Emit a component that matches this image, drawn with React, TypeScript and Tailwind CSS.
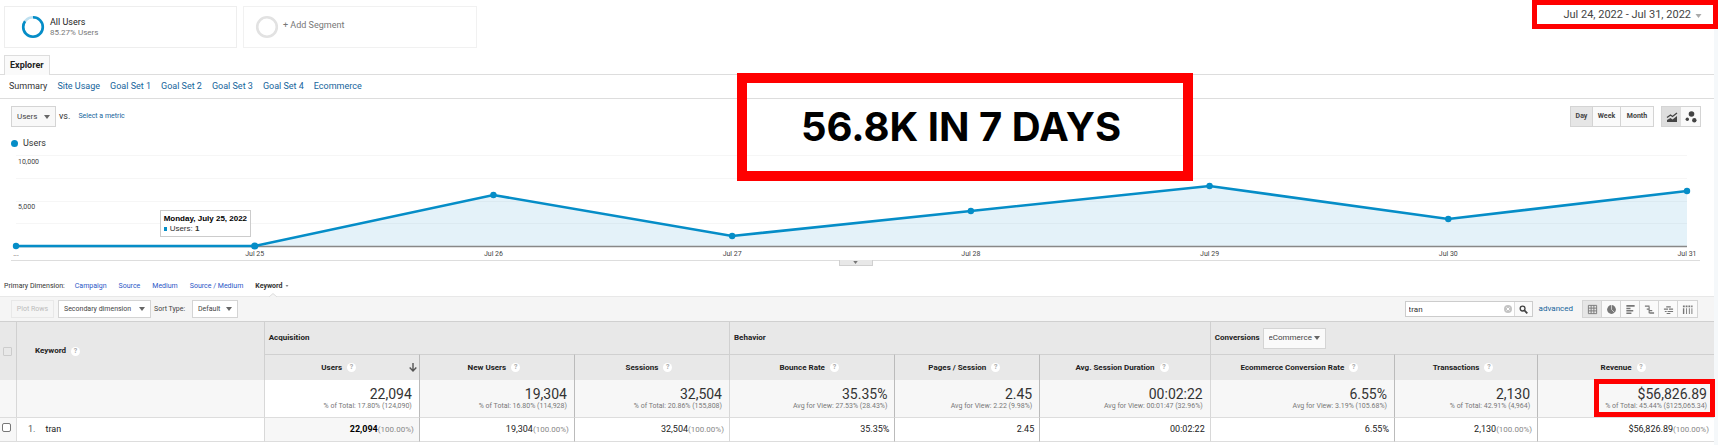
import React, { useState } from 'react';
import clsx from 'clsx';

const POINTS = [
  { label: '...', y: 96 },
  { label: 'Jul 25', y: 96 },
  { label: 'Jul 26', y: 45 },
  { label: 'Jul 27', y: 86 },
  { label: 'Jul 28', y: 61 },
  { label: 'Jul 29', y: 36 },
  { label: 'Jul 30', y: 69 },
  { label: 'Jul 31', y: 41 },
];

const LINKS = ['Summary', 'Site Usage', 'Goal Set 1', 'Goal Set 2', 'Goal Set 3', 'Goal Set 4', 'Ecommerce'];
const DIMENSIONS = ['Campaign', 'Source', 'Medium', 'Source / Medium'];

interface Metric {
  name: string;
  total: string;
  note: string;
  value: string;
  share?: boolean;
  group?: boolean;
}

const METRICS: Metric[] = [
  { name: 'Users', total: '22,094', note: '% of Total: 17.80% (124,090)', value: '22,094', share: true, group: true },
  { name: 'New Users', total: '19,304', note: '% of Total: 16.80% (114,928)', value: '19,304', share: true },
  { name: 'Sessions', total: '32,504', note: '% of Total: 20.86% (155,808)', value: '32,504', share: true },
  { name: 'Bounce Rate', total: '35.35%', note: 'Avg for View: 27.53% (28.43%)', value: '35.35%', group: true },
  { name: 'Pages / Session', total: '2.45', note: 'Avg for View: 2.22 (9.98%)', value: '2.45' },
  { name: 'Avg. Session Duration', total: '00:02:22', note: 'Avg for View: 00:01:47 (32.96%)', value: '00:02:22' },
  { name: 'Ecommerce Conversion Rate', total: '6.55%', note: 'Avg for View: 3.19% (105.68%)', value: '6.55%', group: true },
  { name: 'Transactions', total: '2,130', note: '% of Total: 42.91% (4,964)', value: '2,130', share: true },
  { name: 'Revenue', total: '$56,826.89', note: '% of Total: 45.44% ($125,065.34)', value: '$56,826.89', share: true },
];

function Caret({ className = 'w-1.5 h-1' }: { className?: string }) {
  return (
    <svg viewBox="0 0 6 4" className={clsx('fill-current', className)} aria-hidden="true">
      <path d="M0 0h6L3 4z" />
    </svg>
  );
}

interface DropdownProps {
  label: string;
  value: string;
  className?: string;
}

function Dropdown({ label, value, className }: DropdownProps) {
  return (
    <span className={clsx('relative flex items-center border border-[#d4d4d4] text-[#444]', className)}>
      <select aria-label={label} className="appearance-none w-full h-full pl-[5px] bg-transparent outline-none cursor-pointer">
        <option>{value}</option>
      </select>
      <span className="absolute right-[5px] pointer-events-none text-[#666]"><Caret /></span>
    </span>
  );
}

function Help({ name }: { name: string }) {
  return (
    <button
      aria-label={`About ${name}`}
      className="w-[9px] h-[9px] ml-[5px] rounded-full bg-white text-[#aaa] text-[7px] leading-[9px] font-bold text-center shrink-0"
    >
      ?
    </button>
  );
}

function Segments() {
  return (
    <div className="flex gap-1.5 pl-1 pt-1.5">
      <button className="flex items-center w-[233px] h-[42px] pl-4 border border-[#eee] text-left">
        <svg viewBox="0 0 24 24" className="w-6 h-6" fill="none" strokeWidth="2.6">
          <circle cx="12" cy="12" r="9.8" stroke="#bfe0f0" />
          <circle cx="12" cy="12" r="9.8" stroke="#058dc7" pathLength="100" strokeDasharray="85 15" transform="rotate(-90 12 12)" />
        </svg>
        <span className="ml-[5px]">
          <span className="block text-[9px] leading-[11px] text-[#222]">All Users</span>
          <span className="block text-[8px] leading-[10px] text-[#777]">85.27% Users</span>
        </span>
      </button>
      <button className="flex items-center w-[234px] h-[42px] pl-[11px] border border-[#f1f1f1] text-left">
        <svg viewBox="0 0 24 24" className="w-6 h-6" fill="none">
          <circle cx="12" cy="12" r="9.8" stroke="#e2e2e2" strokeWidth="2.6" />
        </svg>
        <span className="ml-1 pb-[3px] text-[9px] leading-[11px] text-[#777]">+ Add Segment</span>
      </button>
    </div>
  );
}

function Chart() {
  const step = 100 / (POINTS.length - 1);
  const line = POINTS.map((p, i) => `${i * step},${p.y}`).join(' ');

  return (
    <div className="relative ml-[11px] mr-[14px] border-b border-[#ddd]">
      <div className="pl-[5px] pr-[13px]">
        <svg className="block w-full h-[109px] overflow-visible" role="img" aria-label="Users per day">
          {[4, 27, 50, 72].map((y) => (
            <line key={y} x1="0" x2="100%" y1={y + 0.5} y2={y + 0.5} stroke="#f6f6f6" />
          ))}
          <svg viewBox="0 1 100 110" width="100%" height="110" preserveAspectRatio="none" className="overflow-visible">
            <polygon points={`0,96 ${line} 100,96`} fill="#058dc7" fillOpacity="0.11" />
          </svg>
          <line x1="0" x2="100%" y1="95.5" y2="95.5" stroke="#888" strokeWidth="1.5" />
          <svg viewBox="0 1 100 110" width="100%" height="110" preserveAspectRatio="none" className="overflow-visible">
            <polyline points={line} fill="none" stroke="#058dc7" strokeWidth="2.6" vectorEffect="non-scaling-stroke" />
          </svg>
          {POINTS.map((p, i) => (
            <g key={p.label}>
              <circle cx={`${i * step}%`} cy={p.y - 1} r={i === 1 ? 3.6 : 3.2} fill="#058dc7" />
              <text x={`${i * step}%`} y="105" textAnchor="middle" className="text-[7px] fill-[#444]">{p.label}</text>
            </g>
          ))}
          <text x="2" y="13" className="text-[7px] fill-[#444]">10,000</text>
          <text x="2" y="58" className="text-[7px] fill-[#444]">5,000</text>
        </svg>
      </div>

      {/* Hovered day */}
      <div className="absolute left-[8.8%] top-[59px] h-[27px] px-[3px] pt-[3px] border border-[#ccc] bg-white font-['Liberation_Sans',sans-serif] text-[8px] leading-[10px] text-[#333] whitespace-nowrap">
        <div className="font-bold text-black">Monday, July 25, 2022</div>
        <div className="flex items-center gap-[3px]">
          <span className="w-[3px] h-1 bg-[#058dc7]" />
          <span>Users: <b>1</b></span>
        </div>
      </div>

      <button aria-label="Collapse chart" className="absolute left-[49%] top-[109px] w-[34px] h-1.5 flex items-center justify-center bg-[#e8e8e8] border border-t-0 border-[#d0d0d0] text-[#777]">
        <Caret className="w-[5px] h-[3px]" />
      </button>
    </div>
  );
}

const VIEWS = [
  {
    name: 'Data',
    icon: <path d="M1.5 1.5h9v9h-9zM1.5 4.5h9M1.5 7.5h9M4.5 1.5v9M7.5 1.5v9" fill="none" stroke="currentColor" />,
  },
  {
    name: 'Percentage',
    icon: (
      <>
        <circle cx="6" cy="6" r="4.8" />
        <path d="M6 1v5l3.5 3.5" fill="none" stroke="#f5f5f5" strokeWidth="0.7" />
      </>
    ),
  },
  { name: 'Performance', icon: <path d="M1.500 1h9v2h-9zM1.500 4h4.500v1.600H1.500zM1.500 6.600h7.500v1.600H1.500zM1.500 9.300h5.500v1.600H1.500z" /> },
  { name: 'Comparison', icon: <path d="M1 1.500h5v1.600H1zM5 3h1.200v7H5zM3 4.800h3v1.600H3zM5 6.500h4v1.400H5zM6 9h5v1.600H6z" /> },
  {
    name: 'Term Cloud',
    icon: <path d="M3.500 2.500h5v1.300h-5zM1 5h4.500v1.300H1zM6.500 5H11v1.300H6.500zM2 7.500h2v1.300H2zM5 7.500h6v1.300H5zM4 9.800h4v1H4z" />,
  },
  {
    name: 'Pivot',
    icon: <path d="M1 1.500h2v2H1zM4 1.500h2v2H4zM7 1.500h2v2H7zM10 1.500h1.500v2H10zM1 4.500h1.500V11H1zM4.500 4.500h1V11h-1zM7.500 4.500h1V11h-1zM10.300 4.500h1V11h-1z" />,
  },
];

function Toolbar() {
  const [query, setQuery] = useState('tran');

  return (
    <div className="flex items-center h-[25px] pl-[11px] pr-4 bg-[#f5f5f5] border-t border-[#e8e8e8] text-[7px] text-[#444]">
      <button disabled className="w-[43px] h-[18px] border border-[#e8e8e8] text-[#bbb] whitespace-nowrap">Plot Rows</button>
      <Dropdown label="Secondary dimension" value="Secondary dimension" className="w-[93px] h-[18px] ml-1 bg-white" />
      <span className="w-[38px] ml-[3px] whitespace-nowrap">Sort Type:</span>
      <Dropdown label="Sort type" value="Default" className="w-[46px] h-[18px] bg-white" />

      <div className="flex items-center ml-auto h-4 bg-white border border-[#ccc] text-[8px]">
        <input
          type="text"
          aria-label="Filter keywords"
          value={query}
          onChange={(e) => setQuery(e.target.value)}
          className="w-[98px] h-full pl-[3px] bg-transparent outline-none text-[#333]"
        />
        <button aria-label="Clear" onClick={() => setQuery('')} className="mr-[2px]">
          <svg viewBox="0 0 8 8" className="w-2 h-2">
            <circle cx="4" cy="4" r="4" fill="#c4c4c4" />
            <path d="M2.500 2.500l3 3M5.500 2.500l-3 3" stroke="#fff" />
          </svg>
        </button>
        <button aria-label="Search" className="flex items-center justify-center w-[18px] h-full border-l border-[#ddd] bg-[#fafafa]">
          <svg viewBox="0 0 10 10" className="w-[9px] h-[9px]" fill="none" stroke="#444">
            <circle cx="4" cy="4" r="2.700" strokeWidth="1.500" />
            <path d="M6 6l3.200 3.200" strokeWidth="2" />
          </svg>
        </button>
      </div>
      <a href="#advanced" className="ml-1.5 text-[8px] text-[#15649b]">advanced</a>
      <div className="flex ml-[9px] h-[18px] border border-[#d4d4d4] divide-x divide-[#d4d4d4] text-[#777]">
        {VIEWS.map((view, i) => (
          <button
            key={view.name}
            aria-label={view.name}
            className={clsx('flex items-center justify-center w-[19px]', i === 0 ? 'bg-[#e6e6e6]' : 'bg-[#fafafa]')}
          >
            <svg viewBox="0 0 12 12" className="w-[11px] h-[11px] fill-current">{view.icon}</svg>
          </button>
        ))}
      </div>
    </div>
  );
}

function KeywordTable() {
  return (
    <table className="w-full table-fixed border-separate border-spacing-0 text-[8px] text-[#222]">
      <colgroup>
        <col className="w-4" />
        <col className="w-[14.45%]" />
        <col className="w-[9.05%]" />
        <col className="w-[9.05%]" />
        <col className="w-[9.05%]" />
        <col className="w-[9.65%]" />
        <col className="w-[8.45%]" />
        <col className="w-[9.95%]" />
        <col className="w-[10.75%]" />
        <col className="w-[8.35%]" />
        <col />
      </colgroup>
      <thead className="bg-[#e8e8e8] text-left font-bold">
        <tr className="h-[33px]">
          <th rowSpan={2} className="border-t border-[#d0d0d0]">
            <input type="checkbox" disabled aria-label="Select all rows" className="appearance-none block w-[9px] h-[9px] ml-[3px] border border-[#ccc] rounded-[1px]" />
          </th>
          <th rowSpan={2} className="pl-[18px] border-t border-l border-[#d0d0d0]">
            <div className="flex items-center">Keyword<Help name="Keyword" /></div>
          </th>
          <th colSpan={3} className="pl-1 border-t border-l border-[#d0d0d0]">Acquisition</th>
          <th colSpan={3} className="pl-1 border-t border-l border-[#d0d0d0]">Behavior</th>
          <th colSpan={3} className="pl-1 border-t border-l border-[#d0d0d0]">
            <div className="flex items-center">
              Conversions
              <Dropdown label="Conversion type" value="eCommerce" className="w-[63px] h-[21px] ml-[3px] bg-[#fafafa] font-normal" />
            </div>
          </th>
        </tr>
        <tr className="h-[26px]">
          {METRICS.map((m, i) => (
            <th key={m.name} className={clsx('relative border-t border-l border-t-[#d0d0d0]', m.group ? 'border-l-[#d0d0d0]' : 'border-l-[#bbb]')}>
              <div className="flex items-center justify-center pr-1.5 whitespace-nowrap">{m.name}<Help name={m.name} /></div>
              {i === 0 && (
                <svg viewBox="0 0 8 9" className="absolute right-[2px] top-2 w-2 h-[9px]" fill="none" stroke="#555" strokeWidth="1.400">
                  <path d="M4 0v8M0.700 4.500L4 8l3.300-3.500" />
                </svg>
              )}
            </th>
          ))}
        </tr>
      </thead>
      <tbody>
        <tr className="h-[37px] bg-[#f7f7f7]">
          <td />
          <td className="border-l border-[#d8d8d8]" />
          {METRICS.map((m, i) => (
            <td
              key={m.name}
              className={clsx(
                'relative pr-[7px] border-l text-right whitespace-nowrap',
                m.group ? 'border-[#d8d8d8]' : 'border-[#bbb]',
                i === 0 && 'bg-white'
              )}
            >
              <div className="pt-px text-[14px] leading-[13px] text-[#333]">{m.total}</div>
              <div className="text-[7px] leading-[10px] text-[#777]">{m.note}</div>
              {m.name === 'Revenue' && (
                <div className="absolute -top-px -right-px bottom-0 w-[121px] border-[5px] border-[#f00]" />
              )}
            </td>
          ))}
        </tr>
        <tr className="h-[25px]">
          <td className="border-y border-[#ddd] bg-[#f7f7f7]">
            <input type="checkbox" aria-label="Select tran" className="appearance-none block w-[9px] h-[9px] ml-[2px] mb-1 border border-[#777] rounded-[2px] bg-white" />
          </td>
          <td className="pl-[11px] border-l border-y border-[#ddd] text-[9px]">
            <span className="mr-[10px] text-[#555]">1.</span>tran
          </td>
          {METRICS.map((m, i) => (
            <td
              key={m.name}
              className={clsx(
                'border-l border-y border-y-[#ddd] text-right text-[9px] whitespace-nowrap pr-[5px]',
                m.group ? 'border-l-[#d8d8d8]' : 'border-l-[#bbb]',
                i === 0 && 'bg-[#f7f7f7]'
              )}
            >
              <span className={clsx(i === 0 && 'font-bold text-black')}>{m.value}</span>
              {m.share && <span className="text-[8px] text-[#888]">(100.00%)</span>}
            </td>
          ))}
        </tr>
      </tbody>
    </table>
  );
}

export default function App() {
  return (
    <div className="relative pr-1 bg-[#f5f8fa] font-[Roboto,sans-serif] overflow-x-hidden">
      <div className="bg-white pb-[3px]">
        <header className="flex items-start justify-between h-[55px]">
          <Segments />
          <button className="flex items-center justify-end gap-1 w-[186px] h-[29px] -mr-1 pt-[2px] pr-[11px] border-[5px] border-[#f00] text-[11px] text-[#444] whitespace-nowrap">
            Jul 24, 2022 - Jul 31, 2022
            <span className="text-[#aaa]"><Caret className="w-[7px] h-1" /></span>
          </button>
        </header>

        <div className="flex h-5 pl-1 border-b border-[#ddd]">
          <button className="h-5 px-[5px] border border-b-0 border-[#ddd] bg-[#fafafa] text-[9px] font-bold text-[#222]">Explorer</button>
        </div>

        <nav className="flex items-center gap-[10px] h-6 pl-[9px] border-b border-[#ddd] text-[9px]">
          {LINKS.map((link, i) => (
            <a key={link} href={`#${link}`} className={i === 0 ? 'text-[#333]' : 'text-[#15649b]'}>{link}</a>
          ))}
        </nav>

        <div className="flex items-center pt-[7px] pl-[11px] pr-[13px] text-[8px]">
          <Dropdown label="Metric" value="Users" className="w-[45px] h-[21px] bg-[#f8f8f8]" />
          <span className="ml-[3px] text-[9px] text-[#333]">vs.</span>
          <a href="#metric" className="ml-2 text-[7px] text-[#15649b]">Select a metric</a>
          <div className="flex ml-auto h-[21px] border border-[#d4d4d4] divide-x divide-[#d4d4d4] text-[7px] font-bold text-[#444]">
            <button className="w-[22px] bg-[#e6e6e6]">Day</button>
            <button className="w-[28px] bg-[#fafafa]">Week</button>
            <button className="w-[32px] bg-[#fafafa]">Month</button>
          </div>
          <div className="flex ml-[7px] h-[21px] border border-[#d4d4d4] text-[#444]">
            <button aria-label="Line chart" className="flex items-center justify-center w-[19px] bg-[#dedede]">
              <svg viewBox="0 0 12 10" className="w-3 h-[10px]">
                <path d="M1 10V8l3.500-2 2 1.500L11 4v6z" fill="currentColor" />
                <path d="M1 5.500L4.500 3l2 1.500L11 1" fill="none" stroke="currentColor" strokeWidth="1.300" />
              </svg>
            </button>
            <button aria-label="Motion chart" className="flex items-center justify-center w-[19px] bg-[#fafafa]">
              <svg viewBox="0 0 12 12" className="w-3 h-3 fill-current">
                <circle cx="6.500" cy="3" r="2.800" />
                <circle cx="2.300" cy="8.300" r="1.700" />
                <circle cx="9.300" cy="9.300" r="2.200" />
              </svg>
            </button>
          </div>
        </div>

        <div className="flex items-center gap-[5px] h-6 pl-[11px] pt-[9px] text-[9px] text-[#333]">
          <span className="w-[7px] h-[7px] rounded-full bg-[#058dc7]" />
          Users
        </div>

        <Chart />

        <div className="flex items-end h-[35px] pb-1 pl-1 text-[7px] leading-3 text-[#333]">
          Primary Dimension:
          <div className="flex gap-3 ml-[10px]">
            {DIMENSIONS.map((dimension) => (
              <a key={dimension} href={`#${dimension}`} className="text-[#2a56c6]">{dimension}</a>
            ))}
            <button className="relative flex items-center gap-[3px] font-bold">
              Keyword
              <span className="text-[#888]"><Caret className="w-1 h-[2px]" /></span>
              <svg viewBox="0 0 8 4" className="absolute left-[14px] -bottom-[5px] w-2 h-1" fill="#f5f5f5" stroke="#ddd">
                <path d="M0 4l4-3.500L8 4" />
              </svg>
            </button>
          </div>
        </div>

        <Toolbar />
        <KeywordTable />
      </div>

      <div className="absolute left-[42.9%] top-[73px] w-[456px] h-[108px] flex items-center justify-center pr-2 border-[10px] border-[#f00] font-[Inter,sans-serif] text-[40px] font-bold text-black whitespace-nowrap">
        56.8K IN 7 DAYS
      </div>
    </div>
  );
}
